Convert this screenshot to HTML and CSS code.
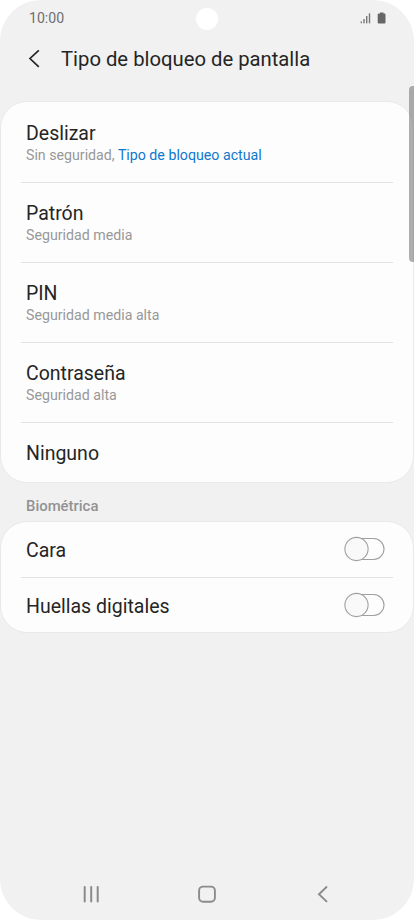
FILE: index.html
```html
<!DOCTYPE html>
<html lang="es">
<head>
<meta charset="utf-8">
<title>Tipo de bloqueo de pantalla</title>
<link rel="stylesheet" href="styles.css">
</head>
<body>
<div class="phone">
  <div class="status">
    <span class="time">10:00</span>
    <svg class="status-icons" width="28" height="14" viewBox="0 0 28 14">
      <g fill="#777"><rect x="0.700" y="9.300" width="1.200" height="2"/><rect x="3.300" y="7" width="1.400" height="4.300"/><rect x="6" y="4" width="1.400" height="7.300"/><rect x="8.800" y="1.300" width="1.400" height="10"/></g>
      <path fill="#666" d="M20 .5h3.500v1h1q1 0 1 1v8q0 1-1 1h-5.800q-1 0-1-1v-8q0-1 1-1H20z"/>
    </svg>
  </div>
  <div class="camera"></div>
  <header class="header">
    <svg class="back" width="14" height="20" viewBox="0 0 14 20"><path d="M11.800 1.300 3 9.500l8.800 8.300" fill="none" stroke="#252525" stroke-width="1.700"/></svg>
    <h1>Tipo de bloqueo de pantalla</h1>
  </header>
  <main>
    <section class="card methods">
      <div class="row"><div class="name">Deslizar</div><div class="sub">Sin seguridad, <span class="current">Tipo de bloqueo actual</span></div></div>
      <div class="row"><div class="name">Patrón</div><div class="sub">Seguridad media</div></div>
      <div class="row"><div class="name">PIN</div><div class="sub">Seguridad media alta</div></div>
      <div class="row"><div class="name">Contraseña</div><div class="sub">Seguridad alta</div></div>
      <div class="row single"><div class="name">Ninguno</div></div>
    </section>
    <h2>Biométrica</h2>
    <section class="card biometrics">
      <div class="row toggle-row"><div class="name">Cara</div>
        <svg width="42" height="26" viewBox="0 0 42 26" fill="none" stroke="#a0a0a0" stroke-width="1.100"><rect x="3" y="2.500" width="37" height="21" rx="10.500"/><circle cx="12.500" cy="13" r="11.600" fill="#f9f9f9"/></svg>
      </div>
      <div class="row toggle-row"><div class="name">Huellas digitales</div>
        <svg width="42" height="26" viewBox="0 0 42 26" fill="none" stroke="#a0a0a0" stroke-width="1.100"><rect x="3" y="2.500" width="37" height="21" rx="10.500"/><circle cx="12.500" cy="13" r="11.600" fill="#f9f9f9"/></svg>
      </div>
    </section>
  </main>
  <nav class="navbar">
    <svg width="20" height="20" viewBox="0 0 20 20" stroke="#8b8b8b" stroke-width="2" stroke-linecap="round"><path d="M3.700 3v14.400M10.200 3v14.400M16.700 3v14.400"/></svg>
    <svg width="20" height="20" viewBox="0 0 20 20" fill="none" stroke="#8b8b8b" stroke-width="1.900"><rect x="2.100" y="2.600" width="15.800" height="15.200" rx="4"/></svg>
    <svg width="20" height="20" viewBox="0 0 20 20" fill="none" stroke="#8b8b8b" stroke-width="1.900"><path d="M14 2.500 6 10.200l8 7.700"/></svg>
  </nav>
  <div class="scrollbar"></div>
</div>
</body>
</html>
```
FILE: styles.css
```css
* { box-sizing: border-box; }
body {
  margin: 0;
  background: #fff;
  font-family: Roboto, sans-serif;
  color: #252525;
}
.phone {
  position: relative;
  display: flex;
  flex-direction: column;
  width: 414px;
  height: 920px;
  overflow: hidden;
  border-radius: 41px;
  background: #f1f1f1;
}
.status {
  display: flex;
  justify-content: space-between;
  height: 36px;
  padding: 10px 26px 0 29px;
}
.time {
  font-size: 14.1px;
  line-height: 16px;
  color: #6f6f6f;
}
.status-icons { margin-top: 1.5px; }
.camera {
  position: absolute;
  top: 8px;
  left: 196px;
  width: 22px;
  height: 22px;
  border-radius: 50%;
  background: #fff;
}
.header {
  display: flex;
  align-items: center;
  height: 46px;
  padding-left: 27px;
  margin-bottom: 19px;
}
.back { margin-right: 20px; }
h1 {
  margin: 0;
  font-size: 20.25px;
  font-weight: 400;
  line-height: 24px;
}
.card {
  border: 1px solid #e9e9e9;
  border-radius: 27px;
  background: #fdfdfd;
}
.row {
  height: 80px;
  margin: 0 20px;
  padding: 19px 5px 0;
  border-bottom: 1px solid #e2e2e2;
}
.methods .row:first-child {
  height: 81px;
  padding-top: 20px;
}
.row:last-child { border-bottom: 0; }
.methods .single { height: 59px; }
.name {
  font-size: 19.5px;
  line-height: 24px;
}
.sub {
  font-size: 14.2px;
  line-height: 19px;
  color: #989898;
}
.current { color: #0d78cd; }
h2 {
  margin: 0;
  height: 38px;
  padding: 14px 0 0 26px;
  font-size: 14.9px;
  font-weight: 500;
  line-height: 19px;
  color: #929292;
}
.toggle-row {
  display: flex;
  align-items: flex-start;
  justify-content: space-between;
  height: 56px;
  padding: 17px 7px 0 5px;
}
.toggle-row svg { margin-top: -3px; }
.toggle-row:last-child { height: 54px; }
.navbar {
  display: flex;
  justify-content: space-between;
  margin-top: auto;
  padding: 0 81px 16px;
}
.scrollbar {
  position: absolute;
  top: 86px;
  right: 0;
  width: 5.5px;
  height: 176px;
  border-radius: 4px 0 0 4px;
  background: rgba(110, 110, 110, .55);
}
```
